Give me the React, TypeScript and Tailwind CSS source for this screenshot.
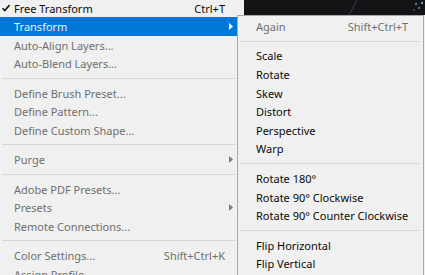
import React from "react";

type Item =
  | { sep: true }
  | { label: string; shortcut?: string; disabled?: boolean; arrow?: boolean; active?: boolean; checked?: boolean };

const leftItems: Item[] = [
  { label: "Free Transform", shortcut: "Ctrl+T", checked: true },
  { label: "Transform", arrow: true, active: true },
  { label: "Auto-Align Layers...", disabled: true },
  { label: "Auto-Blend Layers...", disabled: true },
  { sep: true },
  { label: "Define Brush Preset...", disabled: true },
  { label: "Define Pattern...", disabled: true },
  { label: "Define Custom Shape...", disabled: true },
  { sep: true },
  { label: "Purge", arrow: true, disabled: true },
  { sep: true },
  { label: "Adobe PDF Presets...", disabled: true },
  { label: "Presets", arrow: true, disabled: true },
  { label: "Remote Connections...", disabled: true },
  { sep: true },
  { label: "Color Settings...", shortcut: "Shift+Ctrl+K", disabled: true },
  { label: "Assign Profile...", disabled: true },
];

const subItems: Item[] = [
  { label: "Again", shortcut: "Shift+Ctrl+T", disabled: true },
  { sep: true },
  { label: "Scale" },
  { label: "Rotate" },
  { label: "Skew" },
  { label: "Distort" },
  { label: "Perspective" },
  { label: "Warp" },
  { sep: true },
  { label: "Rotate 180°" },
  { label: "Rotate 90° Clockwise" },
  { label: "Rotate 90° Counter Clockwise" },
  { sep: true },
  { label: "Flip Horizontal" },
  { label: "Flip Vertical" },
];

function Check() {
  return (
    <svg width="8" height="8" viewBox="0 0 8 8" className="absolute left-[2px] top-[5px]">
      <path d="M0.5 4.2 L2.8 6.6 L7.5 1" stroke="#111" strokeWidth="1.6" fill="none" />
    </svg>
  );
}

function Arrow({ color }: { color: string }) {
  return (
    <svg width="4" height="7" viewBox="0 0 4 7" className="absolute right-[4px] top-[6px]">
      <path d="M0 0 L4 3.5 L0 7 Z" fill={color} />
    </svg>
  );
}

function Row({ item, sub }: { item: Item; sub?: boolean }) {
  if ("sep" in item) {
    return (
      <div className={`h-[11px] shrink-0 flex items-center ${sub ? "pl-[2px] pr-[4px]" : "pl-[2px] pr-[2px]"}`}>
        <div className="h-px w-full bg-[#d5d5d5]" />
      </div>
    );
  }
  const color = item.active ? "text-[#e8f3ff]" : item.disabled ? "text-[#6f6f6f]" : "text-[#0a0a0a]";
  return (
    <div
      className={`relative shrink-0 ${sub ? "h-[18.6px]" : "h-[18.5px]"} flex items-center ${
        sub ? "pl-[18px] pr-[15px]" : "pl-[14px] pr-[12px]"
      } ${item.active ? "bg-[#0078d7]" : ""} ${color}`}
    >
      {item.checked && <Check />}
      <span className="flex-1 whitespace-nowrap">{item.label}</span>
      {item.shortcut && <span className="whitespace-nowrap">{item.shortcut}</span>}
      {item.arrow && <Arrow color={item.active ? "#ffffff" : "#7a7a7a"} />}
    </div>
  );
}

export default function App() {
  return (
    <div
      className="w-[425px] h-[275px] overflow-hidden flex bg-[#f0f0f0] text-[11px] leading-none"
      style={{ fontFamily: '"Noto Sans", "Open Sans", sans-serif' }}
    >
      <div className="w-[237px] shrink-0 flex flex-col -mt-[1.25px]">
        {leftItems.map((it, i) => (
          <Row key={i} item={it} />
        ))}
      </div>
      <div className="flex-1 flex flex-col">
        <div className="h-[15px] flex shrink-0">
          <div className="w-[7px]" />
          <div className="flex-1 bg-[#141416]">
            <svg width="181" height="15" viewBox="0 0 181 15">
              <path d="M105 15 L113 0" stroke="#2a3a5a" strokeWidth="1" />
              <circle cx="172" cy="4" r="1" fill="#6fa0d0" />
              <circle cx="175" cy="8" r="1" fill="#5d8fc0" />
              <circle cx="178" cy="3" r="1" fill="#8bbbe6" />
              <circle cx="170" cy="10" r="0.8" fill="#4a78a8" />
            </svg>
          </div>
        </div>
        <div className="flex-1 flex flex-col border-l border-t border-r border-[#a9a9a9] bg-[#f0f0f0] pt-[1px] mr-[1px]">
          {subItems.map((it, i) => (
            <Row key={i} item={it} sub />
          ))}
        </div>
      </div>
    </div>
  );
}
